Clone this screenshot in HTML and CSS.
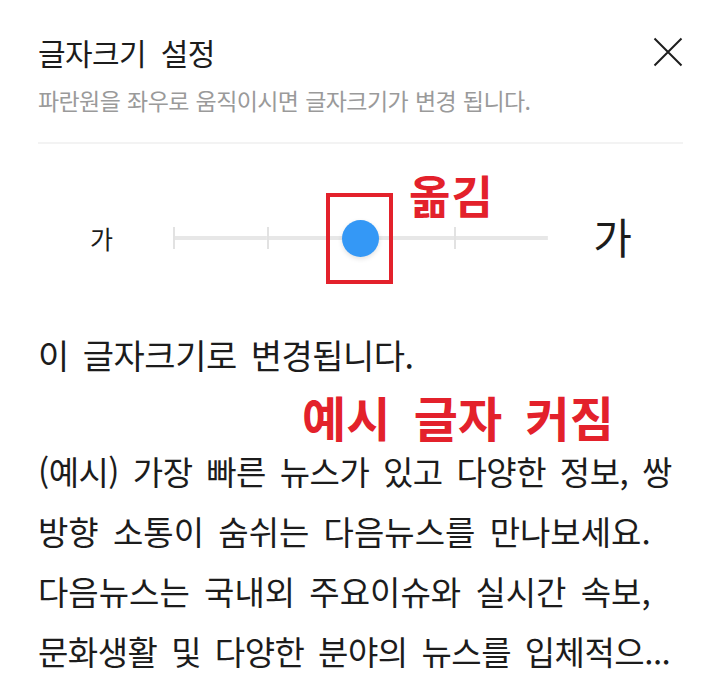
FILE: index.html
```html
<!DOCTYPE html>
<html lang="ko">
<head>
<meta charset="utf-8">
<title>글자크기 설정</title>
<link rel="stylesheet" href="styles.css">
</head>
<body>
<div class="sheet">
  <header class="sheet-head">
    <div class="head-text">
      <h1 class="title">글자크기 설정</h1>
      <p class="subtitle">파란원을 좌우로 움직이시면 글자크기가 변경 됩니다.</p>
    </div>
    <button class="close" type="button" aria-label="닫기">
      <svg viewBox="0 0 30 30" width="30" height="30"><path d="M1.5 1.5 L28.5 28.5 M28.5 1.5 L1.5 28.5" stroke="#1e1e1e" stroke-width="2" fill="none"/></svg>
    </button>
  </header>

  <div class="size-row">
    <span class="label-small">가</span>
    <div class="rail">
      <span class="seg"></span><span class="seg"></span><span class="seg"></span><span class="seg"></span>
      <span class="knob"></span>
      <span class="mark-box"></span>
      <span class="mark-text">옮김</span>
    </div>
    <span class="label-large">가</span>
  </div>

  <p class="sample">이 글자크기로 변경됩니다.</p>
  <p class="note">예시 글자 커짐</p>

  <div class="preview">
    <span class="line">(예시) 가장 빠른 뉴스가 있고 다양한 정보, 쌍</span>
    <span class="line wide">방향 소통이 숨쉬는 다음뉴스를 만나보세요.</span>
    <span class="line wide">다음뉴스는 국내외 주요이슈와 실시간 속보,</span>
    <span class="line">문화생활 및 다양한 분야의 뉴스를 입체적으...</span>
  </div>
</div>
</body>
</html>
```

FILE: styles.css
```css
* { box-sizing: border-box; }

html, body {
  margin: 0;
  background: #fff;
}

body {
  font-family: "Noto Sans CJK KR", "Noto Sans", sans-serif;
  color: #1c1c1c;
}

.sheet {
  width: 720px;
  padding: 0 37px 0 38px;
}

/* header */
.sheet-head {
  display: flex;
  justify-content: space-between;
  align-items: flex-start;
  padding-top: 34px;
  padding-bottom: 30px;
  border-bottom: 2px solid #f3f3f3;
}

.title {
  margin: 0;
  font-size: 30px;
  font-weight: 400;
  line-height: 36px;
  letter-spacing: -0.6px;
  word-spacing: 7px;
}

.subtitle {
  margin: 18px 0 0;
  font-size: 23px;
  line-height: 24px;
  color: #9a9a9a;
  letter-spacing: -0.6px;
  word-spacing: 1px;
}

.close {
  margin: 3px 0 0;
  padding: 0;
  border: 0;
  background: none;
  width: 30px;
  height: 30px;
  display: block;
}
.close svg { display: block; }

/* slider row */
.size-row {
  display: flex;
  align-items: center;
  height: 90px;
  margin-top: 49px;
}

.label-small {
  width: 127px;
  text-align: center;
  font-size: 25px;
  line-height: 30px;
}

.label-large {
  flex: 1;
  text-align: center;
  padding-right: 14px;
  font-size: 42px;
  line-height: 50px;
  margin-top: -4px;
}

.rail {
  position: relative;
  display: flex;
  width: 391px;
  padding: 0 8px;
  height: 22px;
}

.seg {
  flex: 1;
  height: 22px;
  border-left: 2px solid #e2e2e2;
  background: linear-gradient(#e7e7e7, #e7e7e7) center / 100% 4px no-repeat;
}
.seg:last-of-type { border-right: 2px solid #e2e2e2; }

.knob {
  position: absolute;
  left: 50%;
  top: 50%;
  width: 37px;
  height: 37px;
  margin: -18px 0 0 -19px;
  border-radius: 50%;
  background: #3498f6;
  box-shadow: 0 2px 5px rgba(0, 0, 0, 0.12);
}

.mark-box {
  position: absolute;
  left: 161px;
  top: -34px;
  width: 67px;
  height: 91px;
  border: 4px solid #e3212b;
}

.mark-text {
  position: absolute;
  left: 244px;
  top: -57px;
  font-size: 45px;
  line-height: 50px;
  font-weight: 700;
  color: #e3212b;
  letter-spacing: 1px;
}

/* preview */
.sample {
  margin: 52px 0 0;
  font-size: 34px;
  line-height: 40px;
  letter-spacing: -0.5px;
  word-spacing: 5px;
}

.note {
  margin: 16px 0 0;
  padding-left: 264px;
  font-size: 48px;
  line-height: 50px;
  font-weight: 700;
  color: #e3212b;
  letter-spacing: 0;
  word-spacing: 10px;
}

.preview {
  font-size: 33px;
  line-height: 60px;
  letter-spacing: -0.5px;
  word-spacing: 5px;
}

.line {
  display: block;
  white-space: nowrap;
}

.line.wide { letter-spacing: 0; }
```
